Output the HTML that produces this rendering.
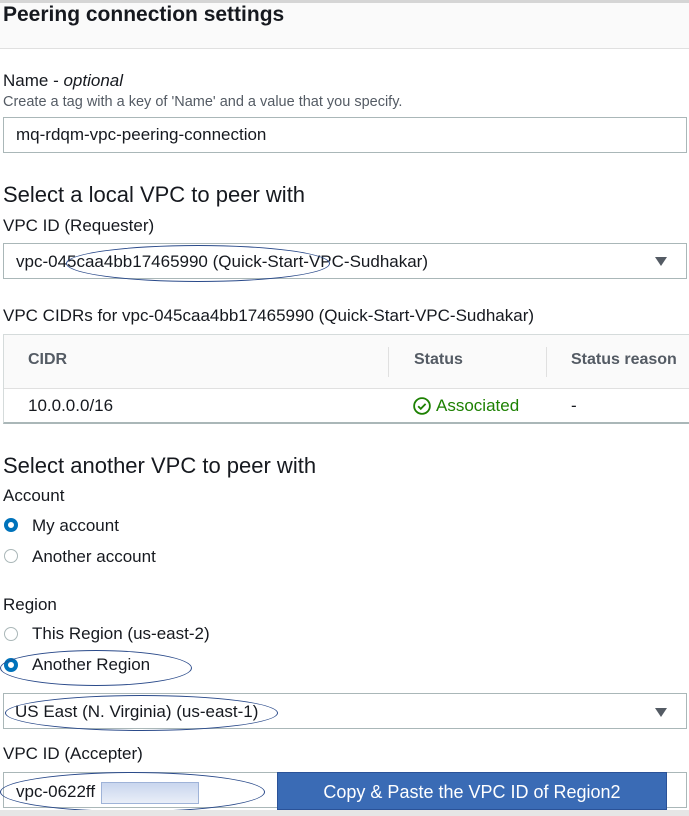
<!DOCTYPE html>
<html><head><meta charset="utf-8"><style>
*{margin:0;padding:0;box-sizing:border-box}
body{width:689px;height:816px;overflow:hidden;background:#fff;font-family:"Liberation Sans",sans-serif;color:#16191f;position:relative}
.a{position:absolute;white-space:nowrap}
.box{position:absolute;border:1px solid #aab7b8;background:#fff}
.h2{font-size:22px}
.lbl{font-size:17px}
.radio{position:absolute;width:14px;height:14px;border-radius:50%;border:1.5px solid #aab7b8;background:#fff}
.radio.on{border:4px solid #0073bb}
.tri{position:absolute;width:0;height:0;border-left:6px solid transparent;border-right:6px solid transparent;border-top:9px solid #545b64}
.ell{position:absolute;border:1px solid #2a4a8a;border-radius:50%}
</style></head><body>
<div class="a" style="left:0;top:0;width:689px;height:3px;background:#d5d5d5"></div>
<div class="a" style="left:0;top:3px;width:689px;height:46px;background:#fafafa;border-bottom:1px solid #e0e0e0"></div>
<div class="a" style="left:3px;top:3px;font-size:21px;font-weight:bold">Peering connection settings</div>

<div class="a lbl" style="left:3px;top:71px">Name - <i>optional</i></div>
<div class="a" style="left:3px;top:94px;font-size:14.5px;color:#545b64">Create a tag with a key of 'Name' and a value that you specify.</div>
<div class="box" style="left:3px;top:117px;width:684px;height:36px"></div>
<div class="a lbl" style="left:16px;top:125px">mq-rdqm-vpc-peering-connection</div>

<div class="a h2" style="left:3px;top:182px">Select a local VPC to peer with</div>
<div class="a lbl" style="left:3px;top:216px">VPC ID (Requester)</div>
<div class="box" style="left:3px;top:243px;width:684px;height:36px"></div>
<div class="a lbl" style="left:16px;top:252px">vpc-045caa4bb17465990 (Quick-Start-VPC-Sudhakar)</div>
<div class="tri" style="left:655px;top:257px"></div>
<div class="ell" style="left:66px;top:245px;width:264px;height:37px"></div>

<div class="a" style="left:3px;top:306px;font-size:17px">VPC CIDRs for vpc-045caa4bb17465990 (Quick-Start-VPC-Sudhakar)</div>
<div class="a" style="left:3px;top:334px;width:690px;height:90px;border:1px solid #d5dbdb;border-bottom:2px solid #aab7b8;background:#fff"></div>
<div class="a" style="left:4px;top:335px;width:690px;height:54px;background:#fafafa;border-bottom:1px solid #e0e0e0"></div>
<div class="a" style="left:388px;top:347px;width:1px;height:30px;background:#e0e0e0"></div>
<div class="a" style="left:546px;top:347px;width:1px;height:30px;background:#e0e0e0"></div>
<div class="a" style="left:28px;top:351px;font-size:16px;font-weight:bold;color:#545b64">CIDR</div>
<div class="a" style="left:414px;top:351px;font-size:16px;font-weight:bold;color:#545b64">Status</div>
<div class="a" style="left:571px;top:351px;font-size:16px;font-weight:bold;color:#545b64">Status reason</div>
<div class="a lbl" style="left:28px;top:396px">10.0.0.0/16</div>
<svg class="a" style="left:413px;top:397px" width="18" height="18" viewBox="0 0 16 16"><circle cx="8" cy="8" r="7" fill="none" stroke="#1d8102" stroke-width="1.6"/><path d="M4.6 8.2l2.3 2.3 4.3-4.4" fill="none" stroke="#1d8102" stroke-width="1.6"/></svg>
<div class="a lbl" style="left:436px;top:396px;color:#1d8102">Associated</div>
<div class="a lbl" style="left:571px;top:396px">-</div>

<div class="a h2" style="left:3px;top:453px">Select another VPC to peer with</div>
<div class="a lbl" style="left:3px;top:486px">Account</div>
<div class="radio on" style="left:4px;top:518px"></div>
<div class="a lbl" style="left:32px;top:516px">My account</div>
<div class="radio" style="left:4px;top:549px"></div>
<div class="a lbl" style="left:32px;top:547px">Another account</div>

<div class="a lbl" style="left:3px;top:595px">Region</div>
<div class="radio" style="left:4px;top:627px"></div>
<div class="a lbl" style="left:32px;top:624px">This Region (us-east-2)</div>
<div class="radio on" style="left:4px;top:658px"></div>
<div class="a lbl" style="left:32px;top:655px">Another Region</div>
<div class="ell" style="left:0;top:650px;width:192px;height:36px"></div>
<div class="box" style="left:3px;top:693px;width:684px;height:36px"></div>
<div class="a lbl" style="left:15px;top:702px">US East (N. Virginia) (us-east-1)</div>
<div class="tri" style="left:655px;top:708px"></div>
<div class="ell" style="left:5px;top:695px;width:273px;height:36px"></div>
<div class="a lbl" style="left:3px;top:744px">VPC ID (Accepter)</div>
<div class="box" style="left:3px;top:772px;width:684px;height:36px"></div>
<div class="a lbl" style="left:16px;top:782px">vpc-0622ff</div>
<div class="a" style="left:101px;top:782px;width:98px;height:22px;background:linear-gradient(#c9d6ee,#e9eef8);border:1px solid #9fb3d8"></div>
<div class="ell" style="left:0;top:772px;width:265px;height:40px"></div>
<div class="a" style="left:277px;top:772px;width:390px;height:38px;background:#3a6bb5;border:1px solid #2a5298;color:#fff;font-size:18px;text-align:center;line-height:38px">Copy &amp; Paste the VPC ID of Region2</div>
<div class="a" style="left:0;top:810px;width:689px;height:6px;background:#e6e6e6"></div>
</body></html>
